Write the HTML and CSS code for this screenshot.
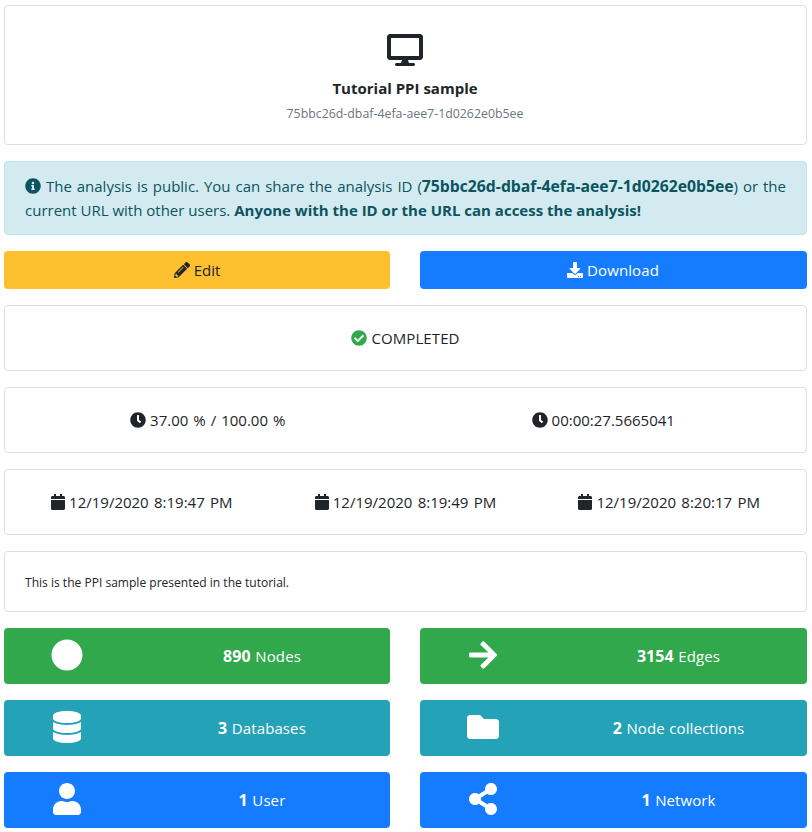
FILE: index.html
```html
<!DOCTYPE html>
<html lang="en">
<head>
<meta charset="utf-8">
<title>Tutorial PPI sample</title>
<link rel="stylesheet" href="styles.css">
</head>
<body>
<svg class="sprite" aria-hidden="true">
<symbol id="desktop" viewBox="0 0 576 512"><path d="M528 0H48C21.5 0 0 21.5 0 48v320c0 26.5 21.5 48 48 48h192l-16 48h-72c-13.3 0-24 10.7-24 24s10.7 24 24 24h272c13.3 0 24-10.7 24-24s-10.7-24-24-24h-72l-16-48h192c26.5 0 48-21.5 48-48V48c0-26.5-21.5-48-48-48zm-16 352H64V64h448v288z"/></symbol>
<symbol id="info" viewBox="0 0 512 512"><path d="M256 8C119.043 8 8 119.083 8 256c0 136.997 111.043 248 248 248s248-111.003 248-248C504 119.083 392.957 8 256 8zm0 110c23.196 0 42 18.804 42 42s-18.804 42-42 42-42-18.804-42-42 18.804-42 42-42zm56 254c0 6.627-5.373 12-12 12h-88c-6.627 0-12-5.373-12-12v-24c0-6.627 5.373-12 12-12h12v-64h-12c-6.627 0-12-5.373-12-12v-24c0-6.627 5.373-12 12-12h64c6.627 0 12 5.373 12 12v100h12c6.627 0 12 5.373 12 12v24z"/></symbol>
<symbol id="pencil" viewBox="0 0 512 512"><path d="M497.9 142.1l-46.1 46.1c-4.7 4.7-12.3 4.7-17 0l-111-111c-4.7-4.7-4.7-12.3 0-17l46.1-46.1c18.7-18.7 49.1-18.7 67.9 0l60.1 60.1c18.8 18.7 18.8 49.1 0 67.9zM284.2 99.8L21.6 362.4.4 483.9c-2.9 16.4 11.4 30.6 27.8 27.8l121.5-21.3 262.6-262.6c4.7-4.7 4.7-12.3 0-17l-111-111c-4.8-4.7-12.4-4.7-17.1 0zM124.1 339.9c-5.5-5.5-5.5-14.3 0-19.8l154-154c5.5-5.5 14.3-5.5 19.8 0s5.5 14.3 0 19.8l-154 154c-5.5 5.5-14.3 5.5-19.8 0zM88 424h48v36.3l-64.5 11.3-31.1-31.1L51.7 376H88v48z"/></symbol>
<symbol id="download" viewBox="0 0 512 512"><path d="M216 0h80c13.3 0 24 10.7 24 24v168h87.7c17.8 0 26.7 21.5 14.1 34.1L269.7 378.3c-7.5 7.5-19.8 7.5-27.3 0L90.1 226.1c-12.6-12.6-3.7-34.1 14.1-34.1H192V24c0-13.3 10.7-24 24-24zm296 376v112c0 13.3-10.7 24-24 24H24c-13.3 0-24-10.7-24-24V376c0-13.3 10.7-24 24-24h146.7l49 49c20.1 20.1 52.5 20.1 72.6 0l49-49H488c13.3 0 24 10.7 24 24zm-124 88c0-11-9-20-20-20s-20 9-20 20 9 20 20 20 20-9 20-20zm64 0c0-11-9-20-20-20s-20 9-20 20 9 20 20 20 20-9 20-20z"/></symbol>
<symbol id="check" viewBox="0 0 512 512"><path d="M504 256c0 136.967-111.033 248-248 248S8 392.967 8 256 119.033 8 256 8s248 111.033 248 248zM227.314 387.314l184-184c6.248-6.248 6.248-16.379 0-22.627l-22.627-22.627c-6.248-6.249-16.379-6.249-22.628 0L216 308.118l-70.059-70.059c-6.248-6.248-16.379-6.248-22.628 0l-22.627 22.627c-6.248 6.248-6.248 16.379 0 22.627l104 104c6.249 6.249 16.379 6.249 22.628.001z"/></symbol>
<symbol id="clock" viewBox="0 0 512 512"><path d="M256,8C119,8,8,119,8,256S119,504,256,504,504,393,504,256,393,8,256,8Zm92.49,313h0l-20,25a16,16,0,0,1-22.49,2.5h0l-67-49.72a40,40,0,0,1-15-31.23V112a16,16,0,0,1,16-16h32a16,16,0,0,1,16,16V256l58,42.5A16,16,0,0,1,348.49,321Z"/></symbol>
<symbol id="calendar" viewBox="0 0 448 512"><path d="M12 192h424c6.6 0 12 5.4 12 12v260c0 26.5-21.5 48-48 48H48c-26.5 0-48-21.5-48-48V204c0-6.6 5.4-12 12-12zm436-44v-36c0-26.5-21.5-48-48-48h-48V12c0-6.6-5.4-12-12-12h-40c-6.6 0-12 5.4-12 12v52H160V12c0-6.6-5.4-12-12-12h-40c-6.6 0-12 5.4-12 12v52H48C21.5 64 0 85.5 0 112v36c0 6.6 5.4 12 12 12h424c6.6 0 12-5.4 12-12z"/></symbol>
<symbol id="circle" viewBox="0 0 512 512"><circle cx="256" cy="256" r="248"/></symbol>
<symbol id="arrow" viewBox="0 0 448 512"><path d="M190.5 66.9l22.2-22.2c9.4-9.4 24.6-9.4 33.9 0L441 239c9.4 9.4 9.4 24.6 0 33.9L246.6 467.3c-9.4 9.4-24.6 9.4-33.9 0l-22.2-22.2c-9.5-9.5-9.3-25 .4-34.3L311.4 296H24c-13.3 0-24-10.7-24-24v-32c0-13.3 10.7-24 24-24h287.4L190.9 101.2c-9.8-9.3-10-24.8-.4-34.3z"/></symbol>
<symbol id="database" viewBox="0 0 448 512"><path d="M448 73.143v45.714C448 159.143 347.667 192 224 192S0 159.143 0 118.857V73.143C0 32.857 100.333 0 224 0s224 32.857 224 73.143zM448 176v102.857C448 319.143 347.667 352 224 352S0 319.143 0 278.857V176c48.125 33.143 136.208 48.572 224 48.572S399.874 209.143 448 176zm0 160v102.857C448 479.143 347.667 512 224 512S0 479.143 0 438.857V336c48.125 33.143 136.208 48.572 224 48.572S399.874 369.143 448 336z"/></symbol>
<symbol id="folder" viewBox="0 0 512 512"><path d="M464 128H272l-64-64H48C21.49 64 0 85.49 0 112v288c0 26.51 21.49 48 48 48h416c26.51 0 48-21.49 48-48V176c0-26.51-21.49-48-48-48z"/></symbol>
<symbol id="user" viewBox="0 0 448 512"><path d="M224 256c70.7 0 128-57.3 128-128S294.7 0 224 0 96 57.3 96 128s57.3 128 128 128zm89.6 32h-16.7c-22.2 10.2-46.9 16-72.9 16s-50.6-5.8-72.9-16h-16.7C60.2 288 0 348.2 0 422.4V464c0 26.5 21.5 48 48 48h352c26.5 0 48-21.5 48-48v-41.6c0-74.2-60.2-134.4-134.4-134.4z"/></symbol>
<symbol id="share" viewBox="0 0 448 512"><path d="M352 320c-22.608 0-43.387 7.819-59.79 20.895l-102.486-64.054a96.551 96.551 0 0 0 0-41.683l102.486-64.054C308.613 184.181 329.392 192 352 192c53.019 0 96-42.981 96-96S405.019 0 352 0s-96 42.981-96 96c0 7.158.79 14.13 2.276 20.841L155.79 180.895C139.387 167.819 118.608 160 96 160c-53.019 0-96 42.981-96 96s42.981 96 96 96c22.608 0 43.387-7.819 59.79-20.895l102.486 64.054A96.301 96.301 0 0 0 256 416c0 53.019 42.981 96 96 96s96-42.981 96-96-42.981-96-96-96z"/></symbol>
</svg>
<main class="page">
  <section class="card header">
    <svg class="desktop"><use href="#desktop"/></svg>
    <h1 class="title">Tutorial PPI sample</h1>
    <p class="identifier">75bbc26d-dbaf-4efa-aee7-1d0262e0b5ee</p>
  </section>
  <div class="alert">
    <p class="filled"><svg class="icon"><use href="#info"/></svg> The analysis is public. You can share the analysis ID (<b class="alert-id">75bbc26d-dbaf-4efa-aee7-1d0262e0b5ee</b>) or the</p>
    <p>current URL with other users. <b>Anyone with the ID or the URL can access the analysis!</b></p>
  </div>
  <div class="pair">
    <a class="button edit"><svg class="icon"><use href="#pencil"/></svg><span>Edit</span></a>
    <a class="button download"><svg class="icon"><use href="#download"/></svg><span>Download</span></a>
  </div>
  <section class="card row">
    <div class="item"><svg class="icon success"><use href="#check"/></svg><span class="status">COMPLETED</span></div>
  </section>
  <section class="card row">
    <div class="item"><svg class="icon"><use href="#clock"/></svg><span class="progress">37.00 % / 100.00 %</span></div>
    <div class="item"><svg class="icon"><use href="#clock"/></svg><span class="elapsed">00:00:27.5665041</span></div>
  </section>
  <section class="card row">
    <div class="item"><svg class="icon narrow"><use href="#calendar"/></svg><span class="date">12/19/2020 8:19:47 PM</span></div>
    <div class="item"><svg class="icon narrow"><use href="#calendar"/></svg><span class="date">12/19/2020 8:19:49 PM</span></div>
    <div class="item"><svg class="icon narrow"><use href="#calendar"/></svg><span class="date">12/19/2020 8:20:17 PM</span></div>
  </section>
  <section class="card description"><p>This is the PPI sample presented in the tutorial.</p></section>
  <div class="pair stats">
    <div class="stat green"><svg class="large"><use href="#circle"/></svg><span><b>890</b> Nodes</span></div>
    <div class="stat green"><svg class="large"><use href="#arrow"/></svg><span><b>3154</b> Edges</span></div>
    <div class="stat teal"><svg class="large"><use href="#database"/></svg><span><b>3</b> Databases</span></div>
    <div class="stat teal"><svg class="large"><use href="#folder"/></svg><span><b>2</b> Node collections</span></div>
    <div class="stat blue"><svg class="large"><use href="#user"/></svg><span><b>1</b> User</span></div>
    <div class="stat blue"><svg class="large"><use href="#share"/></svg><span><b>1</b> Network</span></div>
  </div>
</main>
</body>
</html>
```
FILE: styles.css
```css
* { box-sizing: border-box; }
body {
  margin: 0;
  background: #fff;
  color: #212529;
  font: 15px/24px "Open Sans", "Noto Sans", sans-serif;
}
h1, p { margin: 0; }
svg { fill: currentColor; }
b { font-weight: 700; }
.sprite { display: none; }
.page {
  display: flex;
  flex-direction: column;
  gap: 16px;
  padding: 5px 5px 4px 4px;
}
.card {
  border: 1px solid #dfdfdf;
  border-radius: 4px;
  background: #fff;
}
.header {
  display: flex;
  flex-direction: column;
  align-items: center;
  height: 140px;
  padding: 28px 1px 0 0;
}
.desktop { width: 36px; height: 32px; }
.title { margin-top: 10px; font-size: 15px; line-height: 24px; }
.identifier { margin-top: 2px; color: #6c757d; font-size: 12.35px; }
.icon { width: 16px; height: 16px; flex: none; }
.icon.narrow { width: 14px; }
.alert {
  height: 74px;
  padding: 12px 20px;
  border: 1px solid #bee5eb;
  border-radius: 4px;
  background: #d3ebf0;
  color: #0c5460;
  white-space: nowrap;
}
.filled { height: 24px; text-align-last: justify; white-space: normal; }
.alert-id { font-size: 15.75px; line-height: 20px; }
.alert .icon { vertical-align: -2px; }
.pair {
  display: grid;
  grid-template-columns: 386px 387px;
  gap: 16px 30px;
}
.button {
  display: flex;
  align-items: center;
  justify-content: center;
  gap: 4px;
  height: 38px;
  border-radius: 4px;
}
.edit { background: #ffc02f; }
.download { padding-right: 1px; background: #157cff; color: #fff; letter-spacing: 0.1px; }
.row { display: flex; height: 66px; padding: 0 5px; }
.item {
  display: flex;
  flex: 1;
  align-items: center;
  justify-content: center;
  gap: 4px;
}
.status { letter-spacing: 0.1px; }
.progress { word-spacing: 1.1px; }
.date { word-spacing: 1.4px; }
.success { color: #31a84b; }
.description { height: 61px; padding: 19px 20px 17px; font-size: 12.05px; }
.stat {
  display: grid;
  grid-template-columns: 126px 1fr;
  column-gap: 4px;
  align-items: center;
  justify-items: center;
  height: 56px;
  border-radius: 4px;
  color: #fff;
  word-spacing: 0.5px;
  letter-spacing: 0.1px;
}
.stat b { font-size: 16px; line-height: 20px; }
.large { width: 32px; height: 32px; margin-bottom: 2px; }
.green { background: #31a84b; }
.teal { background: #24a2b8; }
.blue { background: #157cff; }
```
